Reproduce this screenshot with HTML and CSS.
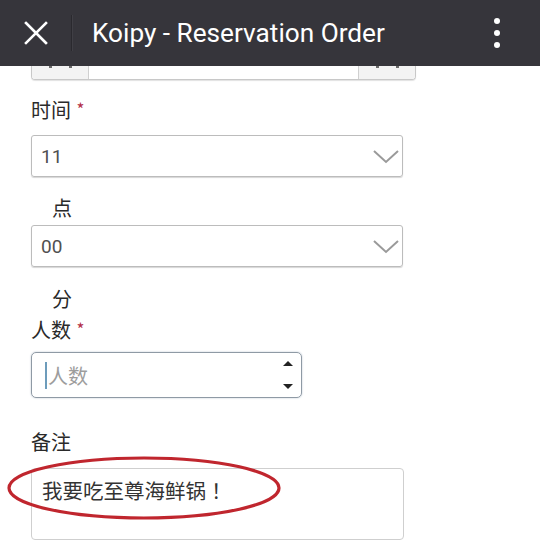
FILE: index.html
```html
<!DOCTYPE html>
<html>
<head>
<meta charset="utf-8">
<link rel="stylesheet" href="styles.css">
</head>
<body>
<header class="bar">
  <svg class="close" width="24" height="24" viewBox="0 0 24 24"><path d="M2 2 L22 22 M22 2 L2 22" stroke="#fff" stroke-width="2.6" stroke-linecap="square"/></svg>
  <span class="divider"></span>
  <h1 class="title">Koipy - Reservation Order</h1>
  <svg class="more" width="8" height="32" viewBox="0 0 8 32"><circle cx="4" cy="4" r="3" fill="#fff"/><circle cx="4" cy="16" r="3" fill="#fff"/><circle cx="4" cy="28" r="3" fill="#fff"/></svg>
</header>
<main class="form">
  <div class="sliver">
    <div class="sl-btn"><i class="tick"></i><i class="tick"></i></div>
    <div class="sl-input"></div>
    <div class="sl-btn sl-right"><i class="tick"></i><i class="tick"></i></div>
  </div>

  <div class="label lbl-time">时间 <span class="req">*</span></div>
  <div class="select sel-1"><span>11</span><svg class="chev" width="26" height="14" viewBox="0 0 26 14"><path d="M1 1 L13 12 L25 1" fill="none" stroke="#9a9a9a" stroke-width="2"/></svg></div>
  <div class="unit unit-1">点</div>
  <div class="select sel-2"><span>00</span><svg class="chev" width="26" height="14" viewBox="0 0 26 14"><path d="M1 1 L13 12 L25 1" fill="none" stroke="#9a9a9a" stroke-width="2"/></svg></div>
  <div class="unit unit-2">分</div>

  <div class="label lbl-people">人数 <span class="req">*</span></div>
  <div class="number">
    <span class="caret"></span><span class="placeholder">人数</span>
    <span class="spin"><svg width="12" height="30" viewBox="0 0 12 30"><path d="M1 6 L6 1 L11 6 Z" fill="#222"/><path d="M1 24 L6 29 L11 24 Z" fill="#222"/></svg></span>
  </div>

  <div class="label lbl-note">备注</div>
  <div class="note-wrap">
    <div class="textarea">我要吃至尊海鲜锅<span class="bang">！</span></div>
    <svg class="circle" width="276" height="66" viewBox="0 0 276 66"><ellipse cx="138" cy="33" rx="135" ry="30" fill="none" stroke="#c0262e" stroke-width="3.2"/></svg>
  </div>
</main>
</body>
</html>
```
FILE: styles.css
```css
* { box-sizing: border-box; }
html, body { margin: 0; padding: 0; background: #fff; }
body {
  width: 540px;
  height: 555px;
  overflow: hidden;
  font-family: Roboto, "Noto Sans CJK SC", sans-serif;
  color: #333;
}
.bar {
  height: 66px;
  background: #36353b;
  display: flex;
  align-items: center;
  padding-left: 24px;
}
.close { flex: none; }
.divider {
  width: 1px;
  height: 36px;
  background: #2a292e;
  margin-left: 23px;
  margin-right: 20px;
  box-shadow: 1px 0 0 #403f45;
}
.title {
  margin: 0;
  font-family: Roboto, sans-serif;
  font-weight: 400;
  font-size: 26.2px;
  color: #fff;
  flex: 1;
}
.more { margin-right: 39px; flex: none; }

.form {
  padding-left: 31px;
  position: relative;
}
.sliver {
  display: flex;
  width: 385px;
  height: 14px;
  border: 1px solid #c8c8c8;
  border-top: none;
  border-radius: 0 0 4px 4px;
  box-shadow: 0 1px 1px #e2e2e2;
  overflow: hidden;
}
.sl-btn {
  width: 57px;
  background: #f3f3f3;
  border-right: 1px solid #d0d0d0;
  display: flex;
  justify-content: center;
  gap: 17px;
}
.tick { width: 3px; height: 2px; background: #6a6a6a; }
.sl-input { flex: 1; background: #fff; }
.sl-right { border-right: none; border-left: 1px solid #d0d0d0; }

.label {
  font-family: "Noto Sans CJK SC", sans-serif;
  font-size: 20px;
  line-height: 24px;
  height: 24px;
  color: #2a2a2a;
}
.req { color: #b3304a; font-size: 17px; margin-left: 1px; vertical-align: 2px; }
.lbl-time { margin-top: 17px; }
.select {
  width: 372px;
  height: 42px;
  border: 1px solid #bcbcbc;
  border-radius: 3px;
  box-shadow: 0 1px 1px #d6d6d6;
  display: flex;
  align-items: center;
  justify-content: space-between;
  padding: 0 3px 0 9px;
  font-size: 19px;
  color: #505050;
}
.sel-1 { margin-top: 14px; }
.sel-2 { margin-top: 5px; }
.chev { margin-top: 2px; }
.unit {
  font-family: "Noto Sans CJK SC", sans-serif;
  font-size: 20px;
  line-height: 24px;
  height: 24px;
  padding-left: 21px;
  color: #2a2a2a;
}
.unit-1 { margin-top: 19px; }
.unit-2 { margin-top: 20px; }
.lbl-people { margin-top: 6px; }
.number {
  margin-top: 11px;
  width: 271px;
  height: 46px;
  border: 1px solid #8f9aa5;
  border-radius: 5px;
  box-shadow: 0 0 2px #b7c3cf;
  display: flex;
  align-items: center;
  padding-left: 13px;
  position: relative;
}
.caret {
  width: 2px;
  height: 27px;
  background: #6d9cbb;
  flex: none;
}
.placeholder {
  font-family: "Noto Sans CJK SC", sans-serif;
  font-size: 20px;
  color: #9d9d9d;
  margin-left: 1px;
}
.spin {
  margin-left: auto;
  margin-right: 7px;
  display: flex;
  align-items: center;
}
.lbl-note { margin-top: 32px; }
.note-wrap { position: relative; margin-top: 14px; }
.textarea {
  width: 373px;
  height: 72px;
  border: 1px solid #cfcfcf;
  border-radius: 4px;
  padding: 9px 10px;
  font-family: "Noto Sans CJK SC", sans-serif;
  font-size: 20.5px;
  line-height: 24px;
  color: #333;
}
.bang { font-family: "Noto Sans CJK JP", sans-serif; }
.circle {
  position: absolute;
  left: -25px;
  top: -13px;
}
```
